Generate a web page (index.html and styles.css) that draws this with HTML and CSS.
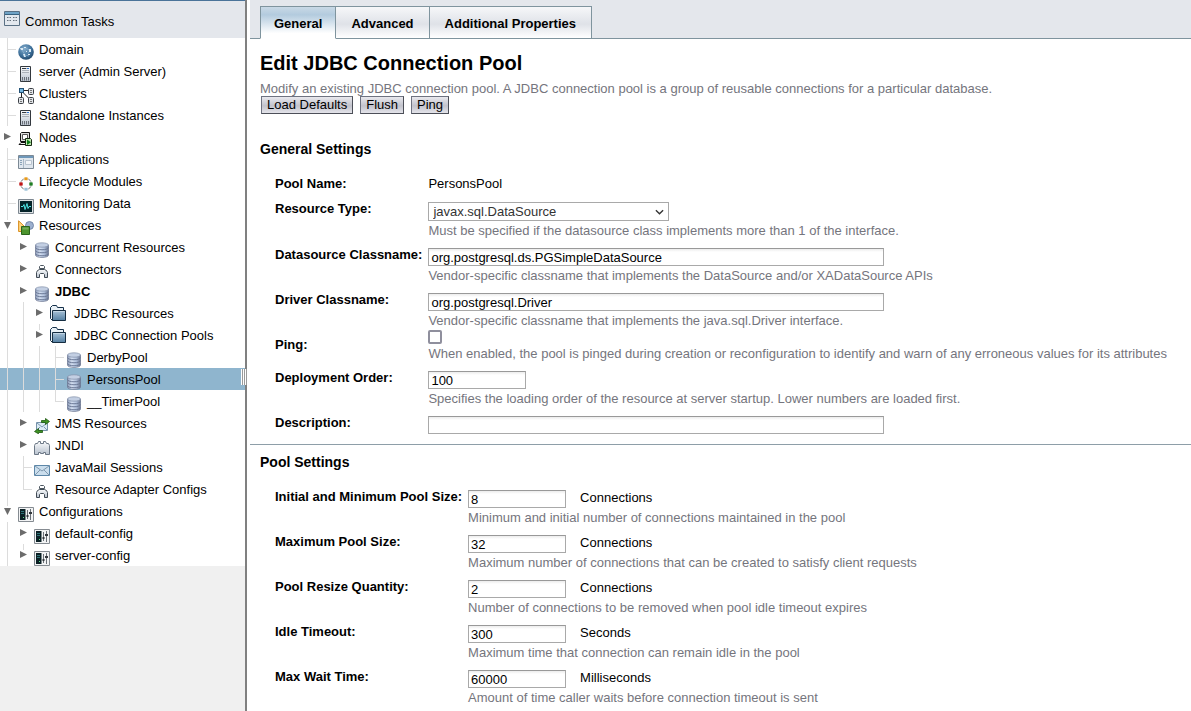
FILE: index.html
```html
<!DOCTYPE html>
<html lang="en">
<head>
<meta charset="utf-8">
<title>Edit JDBC Connection Pool</title>
<link rel="stylesheet" href="styles.css">
</head>
<body>
<svg class="sprite" aria-hidden="true">
  <defs>
    <linearGradient id="metal" x1="0" x2="1" y1="0" y2="0"><stop offset="0" stop-color="#8e9cba"/><stop offset=".35" stop-color="#d3def0"/><stop offset=".65" stop-color="#b3c3de"/><stop offset="1" stop-color="#6b7590"/></linearGradient>
    <linearGradient id="steel" x1="0" x2="0" y1="0" y2="1"><stop offset="0" stop-color="#a9c3d8"/><stop offset="1" stop-color="#5580a3"/></linearGradient>
    <linearGradient id="pale" x1="0" x2="0" y1="0" y2="1"><stop offset="0" stop-color="#fbfcfd"/><stop offset="1" stop-color="#b8c2ce"/></linearGradient>
    <radialGradient id="ball" cx=".4" cy=".3" r=".75"><stop offset="0" stop-color="#86aecd"/><stop offset=".6" stop-color="#3f719b"/><stop offset="1" stop-color="#1f4668"/></radialGradient>
  </defs>
  <symbol id="tasks" viewBox="0 0 16 16"><path d="M.5.5h15v14H.5z" fill="#e3e8ee" stroke="#5a7084"/><path d="M1 1h14v2H1z" fill="#6fa3c6"/><path d="M1 3.500h14" stroke="#38627f"/><path d="M3 6.500h4M9 6.500h4M3 9.500h4M9 9.500h4" stroke="#66717d" stroke-dasharray="1 .5"/></symbol>
  <symbol id="globe" viewBox="0 0 16 16"><circle cx="8" cy="8" r="7.800" fill="url(#ball)"/><path d="M3 5.500l4-2 5 3-2 3M4 6l3 5 4 1" fill="none" stroke="#8fb5d1" stroke-width=".7"/><path d="M2 4h3v2H3zM6 3h2v1H6zM11 5h2v3h-2zM8 7h1v1H8zM5 10h2v1l1 2H6zM10 10h2v1h-2z" fill="#d9e9f4"/></symbol>
  <symbol id="server" viewBox="0 0 16 16"><path d="M2.500.5h10v15h-10z" fill="url(#pale)" stroke="#33383e"/><path d="M4 2.500h5M4 4.500h7M4 6.500h7" stroke="#aab0b8"/><path d="M4 2.500h4" stroke="#343a42"/><path d="M9 2h2v1H9z" fill="#2872d3"/><path d="M4.500 11v3.500M6.500 11v3.500M8.500 11v3.500M10.500 11v3.500" stroke="#6a7078"/></symbol>
  <symbol id="cluster" viewBox="0 0 16 16"><path d="M5 2.500h6M3.500 5v5M5 4.500l6 6" stroke="#222" fill="none"/><rect x="1.500" y=".5" width="4" height="4" fill="#72b5df" stroke="#245277"/><g fill="#e1e4e8" stroke="#3b3f44"><rect x="10.500" y=".5" width="5" height="6" rx="1"/><rect x=".5" y="9.500" width="5" height="6" rx="1"/><rect x="10.500" y="9.500" width="5" height="6" rx="1"/></g><path d="M12 2.500h2M12 4.500h2M2 11.500h2M2 13.500h2M12 11.500h2M12 13.500h2" stroke="#777"/></symbol>
  <symbol id="nodes" viewBox="0 0 16 16"><path d="M2.500 1.500l1-1h8v8l-1 1h-8z" fill="#ddd" stroke="#111"/><path d="M4.500 2.500h5v5h-5z" fill="#fff" stroke="#555"/><path d="M3 10.500l-2 2h9v-2z" fill="#eee" stroke="#111"/><path d="M7.500 6.500h5l1 1v6h-6z" fill="#bfe3b1" stroke="#162a12"/><path d="M9 7.500l4 2.800-4 2.800z" fill="#0b7c16"/></symbol>
  <symbol id="app" viewBox="0 0 16 16"><path d="M.5 1.500h15v13H.5z" fill="#dfe6ed" stroke="#7c8995"/><path d="M1 2h14v2H1z" fill="#6f98ba"/><path d="M2 6h2v1H2zM2 8h2v1H2zM2 10h2v1H2z" fill="#8aa3b8"/><path d="M5.500 5v9" stroke="#a9b8c6"/><path d="M7.500 6.500h6v4h-6z" fill="#f2f5f8" stroke="#b8c3ce"/></symbol>
  <symbol id="cycle" viewBox="0 0 16 16"><circle cx="8" cy="8" r="5.500" fill="none" stroke="#555" stroke-width=".8"/><g stroke="#fff" stroke-width=".6"><rect x="6" y="1" width="4" height="3.500" rx="1" fill="#e79a1c"/><rect x="1" y="6" width="4" height="4" rx="1" fill="#bf1616"/><rect x="11" y="6" width="4" height="4" rx="1" fill="#1f7d23"/><rect x="6" y="11.500" width="4" height="3.500" rx="1" fill="#9dc3d9"/></g></symbol>
  <symbol id="monitor" viewBox="0 0 16 16"><path d="M.5 1.500h15v14H.5z" fill="#dde1e4" stroke="#7d8790"/><path d="M2 3h12v11H2z" fill="#052329"/><path d="M3 8.500h2l1-2 1 5 2-6 1 5 1-2h2" fill="none" stroke="#4fe3e3"/></symbol>
  <symbol id="resource" viewBox="0 0 16 16"><circle cx="11.500" cy="5.500" r="4" fill="#9db0cf" stroke="#657a9c" stroke-width=".8"/><path d="M.6.8v10.700h8L8 8z" fill="#ffd681" stroke="#d98d1c"/><path d="M3.500 6.500h8v8h-8z" fill="#4c942d" stroke="#2b641c"/><path d="M4.500 7.500h6v2h-6z" fill="#76ad58"/></symbol>
  <symbol id="db" viewBox="0 0 16 16"><path d="M1.500 3v10c0 3.300 13 3.300 13 0V3z" fill="url(#metal)" stroke="#6d7790" stroke-width=".7"/><path d="M1.500 5.500c0 3 13 3 13 0M1.500 8.500c0 3 13 3 13 0M1.500 11.500c0 3 13 3 13 0" fill="none" stroke="#6b7996"/><ellipse cx="8" cy="3" rx="6.500" ry="2.200" fill="#c3cfe3" stroke="#8390aa" stroke-width=".7"/></symbol>
  <symbol id="connector" viewBox="0 0 16 16"><path d="M5.500 4.500v-2l1-1h3l1 1v2z" fill="#fff" stroke="#4d5761"/><path d="M3.500 6.500l2-1h5l2 1 1 2v5h-3v-3l-1-1h-3l-1 1v3h-3v-5z" fill="url(#pale)" stroke="#424c56"/></symbol>
  <symbol id="folder" viewBox="0 0 16 16"><path d="M.5 13.500v-11l2-2h4l1 2h6v3" fill="#eaf1f6" stroke="#15304a"/><path d="M.5 13.500l2 2v-10h13v10h-13" fill="url(#steel)" stroke="#152d41"/><path d="M3.500 6.500h11" stroke="#c3d6e4"/></symbol>
  <symbol id="jms" viewBox="0 0 16 16"><path d="M2.500 4.500h11v8h-11z" fill="#dceaf5" stroke="#7693ab"/><path d="M3 5l5 4 5-4M3 12l3-3M13 12l-3-3" fill="none" stroke="#7898b1"/><path d="M7.500 2.500h4v-2l4 3-4 3v-2h-4zM8.500 12.500h-4v-2l-4 3 4 2.300v-1.300h4z" fill="#3f9423" stroke="#1c570f" stroke-width=".8"/></symbol>
  <symbol id="jndi" viewBox="0 0 16 16"><path d="M.5 14.500v-9l1-2h2l1-2h2v2h3v-2h2l1 2h2l1 2v9h-4v-2h-2v1h-3v-1h-2v2z" fill="url(#pale)" stroke="#6c7886"/></symbol>
  <symbol id="mail" viewBox="0 0 16 16"><path d="M.5 3.500h15v10H.5z" fill="#cbdeed" stroke="#5d87a8"/><path d="M1 4l7 5 7-5M1 13l5-5M15 13l-5-5" fill="none" stroke="#8099ae"/></symbol>
  <symbol id="config" viewBox="0 0 16 16"><path d="M.5 1.500h15v14H.5z" fill="#f2f3f4" stroke="#858b91"/><path d="M2 3h5.500v11H2z" fill="#0b2025"/><path d="M3 5.500h3M3 7.500h3" stroke="#2f7478"/><path d="M5 11h1v1H5z" fill="#5fe08a"/><path d="M9.500 4v9M12.500 3v11" stroke="#6a7076"/><path d="M8.500 9h2v2h-2zM11 6h3v2h-3z" fill="#34383d"/></symbol>
</svg>

<div class="layout">
  <nav class="sidebar" aria-label="Common Tasks">
    <a class="tasks" href="#"><svg class="icon"><use href="#tasks"/></svg>Common Tasks</a>
    <ul class="tree">
      <li><i class="g tee"></i><a href="#"><svg class="icon"><use href="#globe"/></svg>Domain</a></li>
      <li><i class="g tee"></i><a href="#"><svg class="icon"><use href="#server"/></svg>server (Admin Server)</a></li>
      <li><i class="g tee"></i><a href="#"><svg class="icon"><use href="#cluster"/></svg>Clusters</a></li>
      <li><i class="g tee"></i><a href="#"><svg class="icon"><use href="#server"/></svg>Standalone Instances</a></li>
      <li><i class="g closed"></i><a href="#"><svg class="icon"><use href="#nodes"/></svg>Nodes</a></li>
      <li><i class="g tee"></i><a href="#"><svg class="icon"><use href="#app"/></svg>Applications</a></li>
      <li><i class="g tee"></i><a href="#"><svg class="icon"><use href="#cycle"/></svg>Lifecycle Modules</a></li>
      <li><i class="g tee"></i><a href="#"><svg class="icon"><use href="#monitor"/></svg>Monitoring Data</a></li>
      <li><i class="g open stub"></i><a href="#"><svg class="icon"><use href="#resource"/></svg>Resources</a></li>
      <li><i class="g line"></i><i class="g closed"></i><a href="#"><svg class="icon"><use href="#db"/></svg>Concurrent Resources</a></li>
      <li><i class="g line"></i><i class="g closed"></i><a href="#"><svg class="icon"><use href="#connector"/></svg>Connectors</a></li>
      <li class="parent"><i class="g line"></i><i class="g closed"></i><a href="#"><svg class="icon"><use href="#db"/></svg>JDBC</a></li>
      <li class="group"><i class="g line"></i><i class="g line"></i><i class="g closed"></i><a href="#"><svg class="icon"><use href="#folder"/></svg>JDBC Resources</a></li>
      <li class="group"><i class="g line"></i><i class="g line"></i><i class="g closed stub"></i><a href="#"><svg class="icon"><use href="#folder"/></svg>JDBC Connection Pools</a></li>
      <li><i class="g line"></i><i class="g line"></i><i class="g line"></i><i class="g tee"></i><a href="#"><svg class="icon"><use href="#db"/></svg>DerbyPool</a></li>
      <li class="selected"><i class="g line"></i><i class="g line"></i><i class="g line"></i><i class="g tee"></i><a href="#" aria-current="page"><svg class="icon"><use href="#db"/></svg>PersonsPool</a></li>
      <li><i class="g line"></i><i class="g line"></i><i class="g line"></i><i class="g elbow"></i><a href="#"><svg class="icon"><use href="#db"/></svg>__TimerPool</a></li>
      <li><i class="g line"></i><i class="g closed"></i><a href="#"><svg class="icon"><use href="#jms"/></svg>JMS Resources</a></li>
      <li><i class="g line"></i><i class="g closed"></i><a href="#"><svg class="icon"><use href="#jndi"/></svg>JNDI</a></li>
      <li><i class="g line"></i><i class="g tee"></i><a href="#"><svg class="icon"><use href="#mail"/></svg>JavaMail Sessions</a></li>
      <li><i class="g line"></i><i class="g elbow"></i><a href="#"><svg class="icon"><use href="#connector"/></svg>Resource Adapter Configs</a></li>
      <li><i class="g open stub"></i><a href="#"><svg class="icon"><use href="#config"/></svg>Configurations</a></li>
      <li><i class="g line"></i><i class="g closed"></i><a href="#"><svg class="icon"><use href="#config"/></svg>default-config</a></li>
      <li><i class="g line"></i><i class="g closed stub"></i><a href="#"><svg class="icon"><use href="#config"/></svg>server-config</a></li>
    </ul>
  </nav>
  <div class="splitter"><span class="grip"></span></div>

  <main class="main">
    <nav class="tabs" aria-label="Pool pages">
      <a class="tab active" href="#" aria-current="page">General</a>
      <a class="tab" href="#">Advanced</a>
      <a class="tab" href="#">Additional Properties</a>
    </nav>
    <form class="content">
      <h1>Edit JDBC Connection Pool</h1>
      <p class="help">Modify an existing JDBC connection pool. A JDBC connection pool is a group of reusable connections for a particular database.</p>
      <div class="actions">
        <button type="button">Load Defaults</button>
        <button type="button">Flush</button>
        <button type="button">Ping</button>
      </div>

      <section class="general">
        <h2>General Settings</h2>
        <div class="fields">
          <span class="label">Pool Name:</span>
          <div class="field"><span class="value">PersonsPool</span></div>

          <label class="label" for="type">Resource Type:</label>
          <div class="field">
            <span class="select"><select id="type"><option>javax.sql.DataSource</option></select><svg viewBox="0 0 10 6"><path d="M1 1l4 4 4-4"/></svg></span>
            <p class="help">Must be specified if the datasource class implements more than 1 of the interface.</p>
          </div>

          <label class="label" for="ds">Datasource Classname:</label>
          <div class="field">
            <input class="text wide" id="ds" type="text" value="org.postgresql.ds.PGSimpleDataSource">
            <p class="help">Vendor-specific classname that implements the DataSource and/or XADataSource APIs</p>
          </div>

          <label class="label" for="driver">Driver Classname:</label>
          <div class="field tight">
            <input class="text wide" id="driver" type="text" value="org.postgresql.Driver">
            <p class="help">Vendor-specific classname that implements the java.sql.Driver interface.</p>
          </div>

          <label class="label low" for="ping">Ping:</label>
          <div class="field check">
            <input id="ping" type="checkbox">
            <p class="help">When enabled, the pool is pinged during creation or reconfiguration to identify and warn of any erroneous values for its attributes</p>
          </div>

          <label class="label" for="order">Deployment Order:</label>
          <div class="field">
            <input class="text short" id="order" type="text" value="100">
            <p class="help">Specifies the loading order of the resource at server startup. Lower numbers are loaded first.</p>
          </div>

          <label class="label" for="desc">Description:</label>
          <div class="field"><input class="text wide" id="desc" type="text"></div>
        </div>
      </section>

      <section class="pool">
        <h2>Pool Settings</h2>
        <div class="fields">
          <label class="label" for="min">Initial and Minimum Pool Size:</label>
          <div class="field">
            <div class="measure"><input class="text short" id="min" type="text" value="8"><span>Connections</span></div>
            <p class="help">Minimum and initial number of connections maintained in the pool</p>
          </div>

          <label class="label" for="max">Maximum Pool Size:</label>
          <div class="field">
            <div class="measure"><input class="text short" id="max" type="text" value="32"><span>Connections</span></div>
            <p class="help">Maximum number of connections that can be created to satisfy client requests</p>
          </div>

          <label class="label" for="resize">Pool Resize Quantity:</label>
          <div class="field">
            <div class="measure"><input class="text short" id="resize" type="text" value="2"><span>Connections</span></div>
            <p class="help">Number of connections to be removed when pool idle timeout expires</p>
          </div>

          <label class="label" for="idle">Idle Timeout:</label>
          <div class="field">
            <div class="measure"><input class="text short" id="idle" type="text" value="300"><span>Seconds</span></div>
            <p class="help">Maximum time that connection can remain idle in the pool</p>
          </div>

          <label class="label" for="wait">Max Wait Time:</label>
          <div class="field tight">
            <div class="measure"><input class="text short" id="wait" type="text" value="60000"><span>Milliseconds</span></div>
            <p class="help">Amount of time caller waits before connection timeout is sent</p>
          </div>
        </div>
      </section>
    </form>
  </main>
</div>
</body>
</html>
```

FILE: styles.css
```css
* { box-sizing: border-box; }
body { margin: 0; background: #fff; color: #000; font: 13px/15px "Liberation Sans", Arial, sans-serif; }
a { color: inherit; text-decoration: none; }
h1, h2, p, ul { margin: 0; padding: 0; }
.sprite { position: absolute; width: 0; height: 0; }
.icon { width: 16px; height: 16px; flex: none; }
.layout { display: flex; min-height: 100vh; }

/* Navigation tree */
.sidebar { flex: 0 0 245px; background: #f0f0f0; }
.tasks { display: flex; gap: 5px; height: 38px; padding: 10px 4px 0; border-top: 1px solid #4a7399; background: #e4e7ec; line-height: 21px; }
.tree { list-style: none; background: #fff; }
.tree li { display: flex; height: 22px; line-height: 24px; white-space: nowrap; }
.tree a { display: flex; gap: 5px; padding-left: 2px; flex: 1; }
.tree .icon { margin-top: 6px; }
.tree .group a { gap: 8px; }
.tree .group .icon { margin-top: 3px; }
.tree .parent { font-weight: bold; }
.tree .selected { background: #8fb5ce; }

.g { flex: none; width: 16px; background-repeat: no-repeat; }
.line { background-image: linear-gradient(#dcdcdc, #dcdcdc); background-size: 1px 100%; background-position: 7px 0; }
.tee, .elbow { background-image: linear-gradient(#dcdcdc, #dcdcdc), linear-gradient(#dcdcdc, #dcdcdc); background-position: 7px 0, 7px 11px; }
.tee { background-size: 1px 100%, 9px 1px; }
.elbow { background-size: 1px 12px, 9px 1px; }
.stub { background-image: linear-gradient(#dcdcdc, #dcdcdc); background-size: 1px 6px; background-position: 7px 0; }
.closed::before, .open::before { content: ""; display: block; background: #6c6c6c; }
.closed::before { width: 7px; height: 7px; margin: 7px 0 0 4px; clip-path: polygon(0 0, 100% 50%, 0 100%); }
.open::before { width: 7px; height: 7px; margin: 8px 0 0 4px; clip-path: polygon(0 0, 100% 0, 50% 100%); }

.splitter { position: relative; flex: 0 0 2px; margin-right: 3px; background: #808080; }
.grip { position: absolute; top: 369px; right: 0; width: 6px; height: 16px; background: repeating-linear-gradient(90deg, #fff 0 1px, #9a9a9a 1px 2px); }

/* Tabs */
.main { flex: 1; min-width: 0; }
.tabs { display: flex; padding: 6px 10px 0; background: linear-gradient(#7f949e, #7f949e) bottom / 100% 1px no-repeat #e4e7ec; }
.tab { height: 33px; padding: 0 15px; border: 1px solid #7f949e; border-left-width: 0; line-height: 33px; font-weight: bold; white-space: nowrap; background: linear-gradient(#f6f7f9, #dfe2e8 55%, #fff); }
.tab.active { padding: 0 13px; border-left-width: 1px; border-bottom-color: #fff; background: linear-gradient(#c9d9e6, #b3cbde 25%, #fff 85%); }

/* Form */
.content { padding-bottom: 5px; }
h1 { padding: 12px 10px 0; font-size: 20px; line-height: 24px; }
h2 { font-size: 14px; line-height: 18px; padding-left: 10px; }
.help { color: #75757d; line-height: 15px; }
.content > .help { padding: 6px 10px 0; }
.actions { display: flex; gap: 7px; padding-left: 11px; }
.actions button { height: 18px; padding: 0 5px; border: 1px solid; border-color: #6e7280 #4c4f58 #4c4f58 #6e7280; background: linear-gradient(#e9e9ee, #c2c3cc 55%, #e4e4ea); font: inherit; line-height: 16px; color: #000; }
.general { padding: 26px 0 10px; border-bottom: 1px solid #8e9ea8; }
.fields { display: grid; grid-template-columns: max-content 1fr; column-gap: 6px; padding: 17px 0 0 25px; }
.pool { padding-top: 8px; }
.label { font-weight: bold; line-height: 18px; }
.label.low { padding-top: 7px; }
.field { display: flex; flex-direction: column; align-items: flex-start; gap: 2px; padding: 2px 0 8px; }
.field.tight { padding-bottom: 1px; }
.field:has(.value) { padding: 0 0 7px; }
.field:last-child { padding-bottom: 0; }
.value { line-height: 18px; }
.text { height: 18px; padding: 1px 2px 0; border: 1px solid #a9a9a9; border-top-color: #999; border-radius: 0; background: linear-gradient(#ececec, #fff 3px); font: inherit; color: #000; }
.wide { width: 456px; max-width: 100%; }
.short { width: 98px; }
.measure { display: flex; gap: 14px; }
.select { display: grid; width: 241px; align-items: center; }
.select > * { grid-area: 1 / 1; }
.select select { appearance: none; width: 100%; height: 19px; padding: 0 20px 0 4px; border: 1px solid #a9a9a9; border-radius: 0; background: #fff; font: inherit; color: #333; }
.select svg { width: 9px; height: 6px; margin-right: 5px; justify-self: end; fill: none; stroke: #333; stroke-width: 1.500; pointer-events: none; }
.check { padding-top: 1px; }
.check input { appearance: none; width: 14px; height: 14px; margin: 0; border: 2px solid #8f8f9d; border-radius: 2px; background: #fff; }
```
